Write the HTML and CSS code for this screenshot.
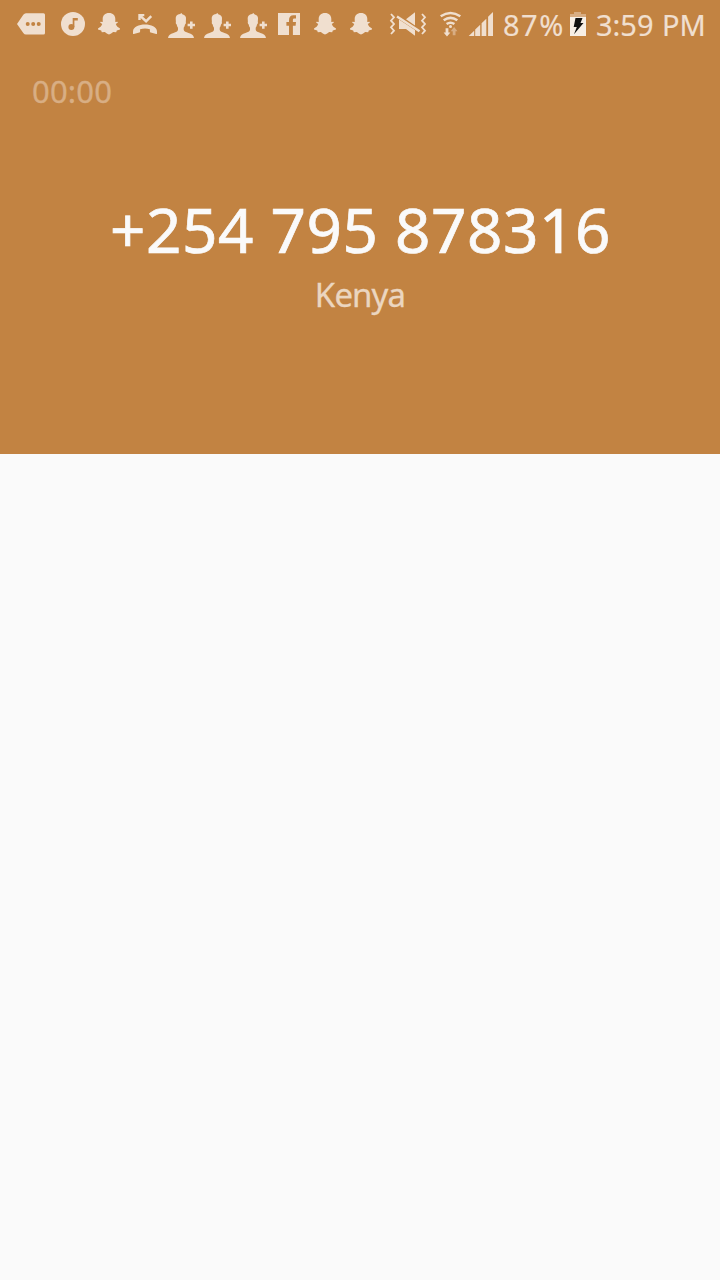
FILE: index.html
```html
<!DOCTYPE html>
<html lang="en">
<head>
<meta charset="utf-8">
<title>Call</title>
<link rel="stylesheet" href="styles.css">
</head>
<body>
<svg class="defs" aria-hidden="true">
  <symbol id="ghost" viewBox="0 0 36 48"><path d="M18 13c4 0 6.300 2.600 6.300 6v3l2.200-.3.400.9-2.100 1.500c.8 2.200 2.100 3.400 4.200 4.300v1l-3.200 1.200-.6 1.600-3-.1c-1.500.6-2.500 2.400-4.200 2.400s-2.700-1.800-4.200-2.400l-3 .1-.6-1.600L7 29.400v-1c2.100-.9 3.400-2.100 4.200-4.300l-2.100-1.500.4-.9 2.200.3v-3c0-3.400 2.300-6 6.300-6z"/></symbol>
  <symbol id="contact" viewBox="0 0 36 48"><path d="M17 14l1.500-1 .8 1.200c2.800.8 3.900 2.300 3.700 4.600l-.2 3.200c.4 1-.1 2-.8 2.600-.3 1.500-.7 2.500-1.300 3.200v2c.4 2 2.200 2.300 4.800 3.100 3.200.9 5 2 5.500 5.100H5c.5-3.100 2.300-4.200 5.500-5.100 2.600-.8 4.100-1.100 4.500-3.100v-2c-.6-.7-1-1.700-1.300-3.200-.7-.6-1.200-1.600-.8-2.600l-.2-3.200c-.2-2.700 1.300-4.300 4.300-4.800z"/><path d="M27 21.500h2.600v2.300H32v2.500h-2.400v2.400H27v-2.400h-2.400v-2.500H27z"/></symbol>
</svg>
<header class="call">
  <div class="status">
    <svg class="more" viewBox="10 0 45 48"><path fill-rule="evenodd" d="M17 24l6.300-9.300Q24.400 13.200 26 13.200h17.500q1.500 0 1.500 1.500v18.200q0 1.500-1.500 1.500H26q-1.600 0-2.700-1.500zM27.700 22a2 2 0 1 0 0 4 2 2 0 0 0 0-4zm5.500 0a2 2 0 1 0 0 4 2 2 0 0 0 0-4zm5.500 0a2 2 0 1 0 0 4 2 2 0 0 0 0-4z"/></svg>
    <svg class="slot" viewBox="0 0 36 48"><circle cx="18" cy="24" r="12"/><g class="cut"><circle cx="16.400" cy="27" r="3"/><path d="M17.700 18h5.100v2.600h-3.400V27h-1.700z"/></g></svg>
    <svg class="slot"><use href="#ghost"/></svg>
    <svg class="slot" viewBox="0 0 36 48"><path d="M11.300 14h6v2.200h-1.900l3.700 3.300 4.300-4.300 1.700 1.700-6 6-5.400-5v2h-2.400zM6 31.500c0-9.300 24-9.300 24 0v1.900q0 .7-.8.600l-5.500-1.500q-.8-.2-.8-1v-2.300c-3-1-6.800-1-9.800 0v2.300q0 .8-.8 1L6.800 34q-.8.1-.8-.6z"/></svg>
    <svg class="slot"><use href="#contact"/></svg>
    <svg class="slot"><use href="#contact"/></svg>
    <svg class="slot"><use href="#contact"/></svg>
    <svg class="slot" viewBox="0 0 36 48"><path d="M7 13h22v22H7z"/><path class="cut" d="M18 35v-9.300h-2.600V22H18v-1.800c0-3.200 1.700-4.900 4.300-4.900H25v3.200h-1.300c-1.200 0-1.800.4-1.800 1.600V22H25l-.4 3.700h-2.700V35z"/></svg>
    <svg class="slot"><use href="#ghost"/></svg>
    <svg class="slot"><use href="#ghost"/></svg>
    <svg class="mute" viewBox="0 0 54 48"><g class="line"><path d="M12 14l3 3.300-3 3.400 3 3.300-3 3.300 3 3.400-3 3.300M43 14l3 3.300-3 3.400 3 3.300-3 3.300 3 3.400-3 3.300"/><path class="slash" d="M18 16.500L40.500 31.200"/></g><path d="M36 12.200v13.300l-9-6.200zM20 19.500L36 30v5.700L27 29h-7z"/></svg>
    <svg class="wifi" viewBox="0 0 34 48"><g class="arc"><path d="M7.700 16.300q9.800-6.800 19.600 0M10.700 20.300q6.800-4.900 13.600 0M13.600 24.100q3.900-2.800 7.800 0"/></g><circle cx="17.500" cy="26.500" r="1.500"/><path d="M12.600 28.300h2.800v4.200h2L14 36.500l-3.400-4h2z"/><path class="dim" d="M19.700 35.300h2.800v-4.100h2L21.100 27l-3.400 4.200h2z"/></svg>
    <svg class="signal" viewBox="0 0 33 48"><path d="M1.700 36L7.200 30.700V36zM8.200 36v-6.400l5-4.800V36zM14.600 36V23.300l4.700-4.500V36zM21.100 36V16.800L26 12v24z"/></svg>
    <span class="level">87%</span>
    <svg class="battery" viewBox="0 0 20 48"><path class="capacity" d="M2 17v-3h4v-2h7v2h5v3z"/><path class="charge" d="M2 17h16v19H2z"/><path class="bolt" d="M7.500 18h7l-2 5h3L6 34.300l2.800-7.300H5.700z"/></svg>
    <span class="clock">3:59 PM</span>
  </div>
  <div class="timer">00:00</div>
  <h1 class="number">+254 795 878316</h1>
  <div class="country">Kenya</div>
</header>
<main class="content"></main>
</body>
</html>
```
FILE: styles.css
```css
body {
  margin: 0;
  min-height: 1280px;
  display: flex;
  flex-direction: column;
  background: #fafafa;
  font-family: "Noto Sans", sans-serif;
}

.defs {
  display: none;
}

.call {
  height: 454px;
  background: #c28342;
  color: #fafafa;
  white-space: nowrap;
}

.content {
  flex: 1;
}

.status {
  display: flex;
  height: 48px;
  padding-left: 10px;
  color: #f0dfcf;
  fill: #f0dfcf;
  font-size: 29px;
  line-height: 49px;
  -webkit-text-stroke: .2px;
}

.status svg {
  flex: none;
  height: 48px;
}

.more { width: 45px; }
.slot { width: 36px; }
.mute { width: 54px; }
.wifi { width: 34px; }
.signal { width: 33px; }
.battery { width: 20px; }

.cut { fill: #c28342; }
.line, .arc { fill: none; stroke: #f0dfcf; stroke-width: 1.8; }
.slash { stroke-width: 2.4; }
.arc { stroke-width: 2.5; }
.dim, .capacity { fill: #d8ad83; }
.charge { fill: #f7efe6; }
.bolt { fill: #111; }

.level {
  width: 68px;
  padding-left: 3px;
  box-sizing: border-box;
  letter-spacing: 1.5px;
}

.clock {
  padding-left: 8px;
  word-spacing: 1px;
}

.timer {
  margin-top: 20px;
  padding-left: 32px;
  color: #d8ae84;
  font-size: 31px;
  line-height: 46px;
  letter-spacing: .2px;
  -webkit-text-stroke: .3px;
}

.number {
  margin: 70px 0 0;
  padding-left: 1px;
  font-size: 62px;
  font-weight: 400;
  line-height: 90px;
  letter-spacing: .5px;
  text-align: center;
  -webkit-text-stroke: .7px;
}

.country {
  color: #ebd6c0;
  font-size: 33px;
  line-height: 42px;
  letter-spacing: -.9px;
  text-align: center;
  -webkit-text-stroke: .3px;
}
```
